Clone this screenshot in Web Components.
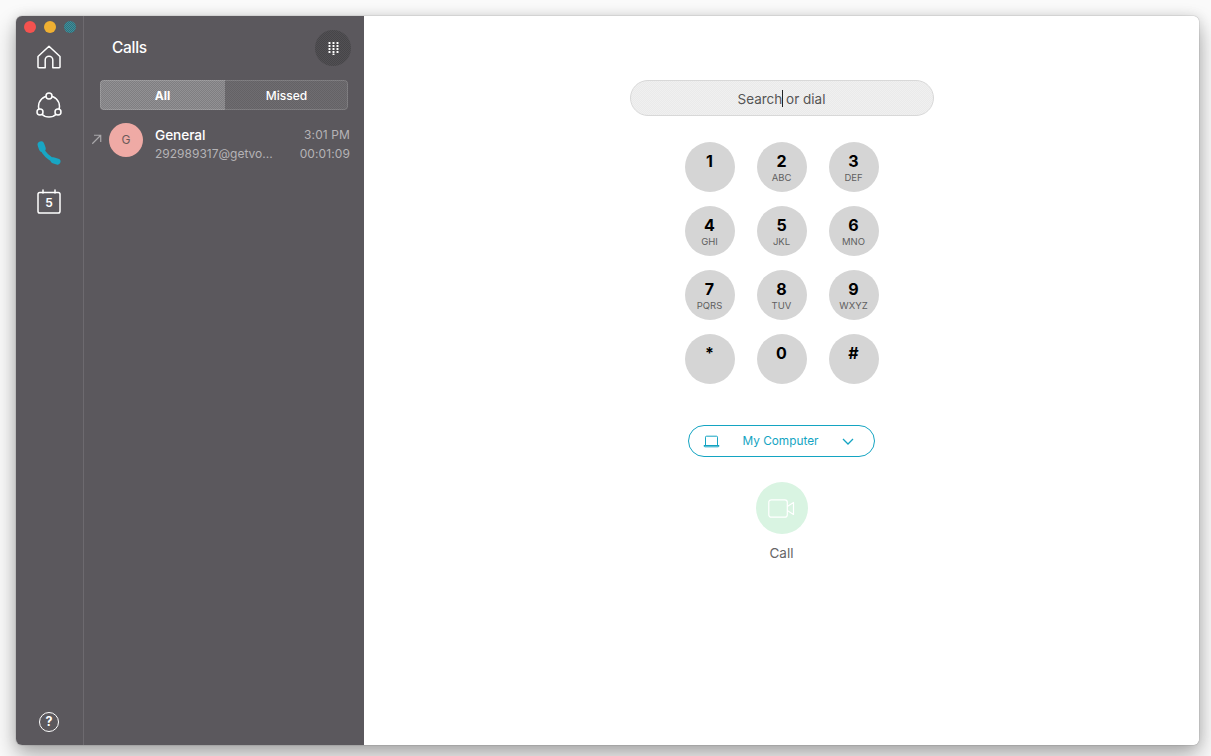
<!DOCTYPE html>
<html><head><meta charset="utf-8"><style>
html,body{margin:0;height:100%}
body{height:756px;overflow:hidden;box-sizing:border-box;padding:16px 12px 11px 16px;background:#fafafa;font-family:Inter,"Liberation Sans",sans-serif;display:flex}
app-window{flex:1}
</style></head><body>
<app-window>
  <nav-rail slot="rail"></nav-rail>
  <calls-panel slot="panel"></calls-panel>
  <dial-pane slot="main"></dial-pane>
</app-window>
<script>
const dots=a=>`background-image:conic-gradient(rgba(0,0,0,${a}) 25%,transparent 0 50%,rgba(0,0,0,${a}) 0 75%,transparent 0);background-size:2px 2px;`;
function def(name,html,init){customElements.define(name,class extends HTMLElement{constructor(){super();this.attachShadow({mode:'open'}).innerHTML=html;}connectedCallback(){init&&init(this)}})}
def('app-window',`<style>
:host{display:flex;height:100%;border-radius:6px;overflow:hidden;box-shadow:0 0 1px rgba(0,0,0,.6),0 10px 22px rgba(0,0,0,.32),0 0 12px rgba(0,0,0,.1);background:#fff}
::slotted([slot=rail]){flex:0 0 68px}::slotted([slot=panel]){flex:0 0 280px}::slotted([slot=main]){flex:1}
</style><slot name="rail"></slot><slot name="panel"></slot><slot name="main"></slot>`);

def('nav-rail',`<style>
:host{display:flex;flex-direction:column;box-sizing:border-box;background:#5b585d;border-right:1px solid #6d6a6f;position:relative}
.lights{display:flex;gap:8px;padding:5px 0 0 8px;height:12px}
.lights i{width:12px;height:12px;border-radius:50%;display:block}
.items{display:flex;flex-direction:column;align-items:center;margin-top:10px;gap:20px;padding-right:1px}
.items svg{display:block;width:28px;height:28px;fill:none;stroke:#fff;stroke-width:1.5;stroke-linejoin:round;stroke-linecap:round}
.sp{flex:1}
.help{display:flex;justify-content:center;padding:0 1px 13px 0}
.help div{width:18px;height:18px;border:1.6px solid #fff;border-radius:50%;color:#fff;font:700 12.5px/18px Inter,"Liberation Sans",sans-serif;text-align:center}
.cal{position:relative;width:28px;height:28px}
.cal span{position:absolute;left:0;right:0;top:8px;text-align:center;color:#fff;font:600 12px/16px Inter,"Liberation Sans",sans-serif}
</style>
<div class="lights"><i style="background:#f5524f"></i><i style="background:#f0b032"></i><i style="background-color:#3f8f9c;${dots(.22)}"></i></div>
<div class="items">
<svg viewBox="0 0 28 28"><path d="M3 13.5 14 3.2l11 10.300V24a.8.8 0 0 1-.8.8h-6.400V17a3.800 3.800 0 0 0-7.600 0v7.800H3.800A.8.8 0 0 1 3 24z"/></svg>
<svg viewBox="0 -1 28 28"><circle cx="14" cy="14.500" r="10.500"/><g style="fill:#5b585d"><circle cx="14" cy="4" r="3"/><circle cx="5" cy="20" r="3"/><circle cx="23" cy="20" r="3"/></g></svg>
<svg viewBox="0 -1 28 28"><g style="stroke:#18a6c4"><path d="M6.500 7.500C8.500 13 14 18.500 20.500 21.300" style="stroke-width:3.800"/><path d="M6 4.800 7.300 8.500" style="stroke-width:6.800"/><path d="M18.500 20.300 22.500 21.600" style="stroke-width:6"/></g></svg>
<div class="cal"><svg viewBox="0 -1 28 28"><rect x="3" y="4.500" width="22" height="20.500" rx="1.800"/><path d="M8 2v3M20 2v3"/></svg><span>5</span></div>
</div>
<div class="sp"></div>
<div class="help"><div>?</div></div>`);

def('calls-panel',`<style>
:host{display:block;background:#5b585d;color:#fff;box-sizing:border-box;padding:14px 14px 0 0}
.head{display:flex;align-items:center;justify-content:space-between;height:36px;padding-left:28px}
h1{margin:0;font:500 15.500px/20px Inter,"Liberation Sans",sans-serif;letter-spacing:-.3px}
.pad{width:36px;height:36px;border-radius:50%;background-color:#525054;${dots(.14)}display:grid;place-items:center;margin-right:-1px}
.pad svg{width:11px;height:13px;fill:#fff;display:block}
.tabs{display:flex;margin:14px 2px 0 16px;height:30px;border-radius:4px;overflow:hidden;font:600 12px/31px Inter,"Liberation Sans",sans-serif;text-align:center;position:relative}
.tabs::after{content:"";position:absolute;inset:0;border-radius:4px;box-shadow:inset 0 0 0 1px rgba(255,255,255,.14)}
.all{flex:0 0 125px;background-color:#929194;${dots(.13)}font-weight:700}
.miss{flex:1;background-color:#6f6d71;${dots(.1)}font-weight:500}
.row{display:flex;align-items:center;height:34px;margin-top:13px;padding-left:7px;position:relative}
.arr{width:11px;height:11px;margin-right:7px;margin-top:-2px;fill:none;stroke:#a9a7aa;stroke-width:1.400}
.av{width:34px;height:34px;border-radius:50%;background:#efaaa5;color:#6b5a5a;font:400 12px/34px Inter,"Liberation Sans",sans-serif;text-align:center;flex:none}
.txt{flex:1;min-width:0;margin-left:12px;padding-top:9px}
.name{font:500 13.700px/18px Inter,"Liberation Sans",sans-serif;letter-spacing:-.1px}
.sub{font:400 12px/18px Inter,"Liberation Sans",sans-serif;color:#b5b3b6;white-space:nowrap;margin-top:1px}
.r{text-align:right;font:400 12px/18px Inter,"Liberation Sans",sans-serif;color:#b5b3b6;letter-spacing:.1px;padding-top:9px}
.r div+div{margin-top:1px}
</style>
<div class="head"><h1>Calls</h1><div class="pad"><svg viewBox="0 0 11 13" id="g"></svg></div></div>
<div class="tabs"><div class="all">All</div><div class="miss">Missed</div></div>
<div class="row"><svg class="arr" viewBox="0 0 13 13"><path d="M1.500 11.500 11.500 1.500M3.500 1.500h8v8"/></svg><div class="av">G</div>
<div class="txt"><div class="name">General</div><div class="sub">292989317@getvo...</div></div>
<div class="r"><div>3:01 PM</div><div>00:01:09</div></div></div>`,el=>{
 let s='';for(let y=0;y<4;y++)for(let x=0;x<3;x++)s+=`<rect x="${x*4+.5}" y="${y*3}" width="2" height="2" rx=".6"/>`;
 s+='<rect x="4.500" y="11.500" width="2" height="1.500" rx=".5"/>';
 el.shadowRoot.getElementById('g').innerHTML=s;
});

def('dial-key',`<style>
:host{display:flex;flex-direction:column;align-items:center;width:50px;height:50px;border-radius:50%;background:#d5d5d5;color:#000;box-sizing:border-box;padding-top:9px}
.n{font:700 16px/20px Inter,"Liberation Sans",sans-serif}
.l{font:400 9.500px/11px Inter,"Liberation Sans",sans-serif;color:#5f5f5f;margin-top:1px}
</style><div class="n"></div><div class="l"></div>`,el=>{
 el.shadowRoot.querySelector('.n').textContent=el.getAttribute('n');
 el.shadowRoot.querySelector('.l').textContent=el.getAttribute('l')||'';
});

def('dial-pane',`<style>
:host{display:flex;flex-direction:column;align-items:center;background:#fff;box-sizing:border-box;padding-top:64px}
.search{width:304px;height:36px;box-sizing:border-box;border:1px solid #d8d8d8;border-radius:18px;background-color:#f0f0f0;${dots(.025)}color:#555;font:400 13.500px/36px Inter,"Liberation Sans",sans-serif;text-align:center;position:relative}
.caret{display:inline-block;width:1px;height:17px;background:#222;vertical-align:-3px;margin-right:-1px}
.grid{display:grid;grid-template-columns:repeat(3,50px);gap:14px 22px;margin-top:26px}
.sel{width:187px;height:32px;box-sizing:border-box;margin-top:41px;border:1px solid #14a4c2;border-radius:16px;color:#14a4c2;display:flex;align-items:center;padding:0 20px 0 14px;font:400 11.800px/1 Inter,"Liberation Sans",sans-serif}
.sel span{flex:1;text-align:center;padding-right:1px;padding-top:1px}
.sel svg{fill:none;stroke:#14a4c2;stroke-width:1;display:block}
.call{width:52px;height:52px;border-radius:50%;background:#d9f4e2;margin-top:25px;display:grid;place-items:center}
.call svg{fill:none;stroke:#fff;stroke-width:1.200;stroke-linejoin:round;display:block}
.lab{margin-top:11px;font:400 13.500px/16px Inter,"Liberation Sans",sans-serif;color:#666}
</style>
<div class="search">Search<span class="caret"></span> or dial</div>
<div class="grid">
<dial-key n="1"></dial-key><dial-key n="2" l="ABC"></dial-key><dial-key n="3" l="DEF"></dial-key>
<dial-key n="4" l="GHI"></dial-key><dial-key n="5" l="JKL"></dial-key><dial-key n="6" l="MNO"></dial-key>
<dial-key n="7" l="PQRS"></dial-key><dial-key n="8" l="TUV"></dial-key><dial-key n="9" l="WXYZ"></dial-key>
<dial-key n="*"></dial-key><dial-key n="0"></dial-key><dial-key n="#"></dial-key>
</div>
<div class="sel"><svg width="17" height="13" viewBox="0 0 17 13"><path d="M2.500 10V2.200a1 1 0 0 1 1-1h10a1 1 0 0 1 1 1V10M1 10.500h15v.3a1 1 0 0 1-1 1H2a1 1 0 0 1-1-1z"/></svg><span>My Computer</span><svg width="12" height="7" viewBox="0 0 12 7" style="stroke-width:1.300"><path d="M1 1l5 5 5-5"/></svg></div>
<div class="call"><svg width="27" height="19" viewBox="0 0 27 19"><rect x=".8" y=".8" width="18.500" height="17.400" rx="2.500"/><path d="M19.300 7.500 25.500 3.500v12l-6.200-4"/></svg></div>
<div class="lab">Call</div>`);
</script>
</body></html>
